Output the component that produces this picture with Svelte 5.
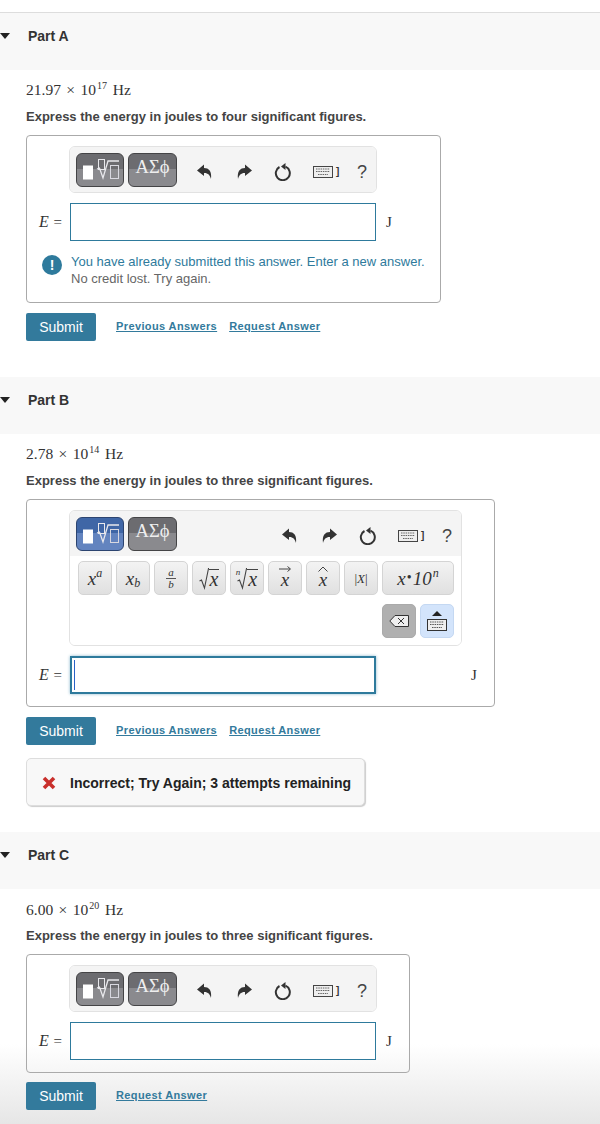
<script>
  const parts = [
    { name: 'Part A', base: '21.97', exp: '17', figures: 'four', expanded: false, alert: true, previous: true },
    { name: 'Part B', base: '2.78', exp: '14', figures: 'three', expanded: true, focused: true, previous: true, wrong: true },
    { name: 'Part C', base: '6.00', exp: '20', figures: 'three', expanded: false }
  ];
</script>

{#snippet templates()}
  <svg width="46" height="32" viewBox="1 1 46 32" fill="none">
    <rect x="7" y="12.500" width="10" height="14" fill="#fff" />
    <rect x="22.500" y="6.500" width="6" height="10" stroke="#e8e8ec" />
    <path d="M21 16l2.500-1 3.500 10 5-17h11" stroke="#e8e8ec" stroke-width="1.300" />
    <rect x="34.500" y="12.500" width="8" height="13" stroke="#d8d8e0" />
  </svg>
{/snippet}

{#snippet keyboard()}
  <svg width="20" height="12" viewBox="0 0 20 12"><rect x=".5" y=".5" width="19" height="11" fill="#eee" stroke="#444" /><path d="M3 3h14M3 5.500h14M5 8.500h10" stroke="#666" stroke-dasharray="1.500 .8" /></svg>
{/snippet}

{#snippet radical()}
  <svg class="radical" width="10" height="22" viewBox="0 0 10 22" fill="none"><path d="M.5 13l2-1 3 8 4-19.500h.5" stroke="#444" stroke-width="1.100" /></svg>
{/snippet}

{#snippet toolIcons()}
  <div class="tools">
    <svg width="18" height="18" viewBox="0 0 18 18"><path d="M1 7.500L8 1.500v3.400c4.800 0 8 3.200 7 11-1-4-3.200-6.200-7-6v3z" fill="#333" /></svg>
    <svg width="18" height="18" viewBox="0 0 18 18"><path d="M17 7.500L10 1.500v3.400c-4.800 0-8 3.200-7 11 1-4 3.200-6.200 7-6v3z" fill="#333" /></svg>
    <svg width="18" height="18" viewBox="0 0 18 18" fill="none"><path d="M5.500 4a7 7 0 1 0 6-.3" stroke="#333" stroke-width="2" /><path d="M11.500 0v7L7 3.500z" fill="#333" /></svg>
    <span class="kbd-wrap">
      {@render keyboard()}
      <span class="bracket">]</span>
    </span>
    <span class="help">?</span>
  </div>
{/snippet}

{#snippet toolbar(expanded)}
  <div class="toolbar" class:wide={expanded}>
    <div class="tool-top">
      <button class="tab" class:active={expanded}>{@render templates()}</button>
      <button class="tab greek">ΑΣϕ</button>
      {@render toolIcons()}
    </div>
    {#if expanded}
      <div class="keys">
        <button class="key"><i>x</i><sup><i>a</i></sup></button>
        <button class="key"><i>x</i><sub><i>b</i></sub></button>
        <button class="key"><span class="frac"><i>a</i><i class="den">b</i></span></button>
        <button class="key">{@render radical()}<i class="over">x</i></button>
        <button class="key"><sup class="root"><i>n</i></sup>{@render radical()}<i class="over">x</i></button>
        <button class="key accent">
          <svg width="12" height="6" viewBox="0 0 12 6" fill="none"><path d="M0 3h11M8.500 .5L11.500 3 8.500 5.500" stroke="#444" /></svg>
          <i>x</i>
        </button>
        <button class="key accent">
          <svg width="12" height="6" viewBox="0 0 12 6" fill="none"><path d="M1.500 5.500L6 1l4.500 4.500" stroke="#444" /></svg>
          <i>x</i>
        </button>
        <button class="key abs">|<i>X</i>|</button>
        <button class="key sci"><i>x</i><span class="dot">•</span><i>10</i><sup><i>n</i></sup></button>
        <div class="key-row2">
          <button class="key del" aria-label="delete">
            <svg width="20" height="12" viewBox="0 0 20 12"><path d="M6 .5h13.500v11H6L.8 6z" fill="#eee" stroke="#333" /><path d="M9 3l6 6M15 3l-6 6" stroke="#333" /></svg>
          </button>
          <button class="key kb" aria-label="keyboard">
            <svg width="20" height="22" viewBox="0 0 20 22"><path d="M10 1l5 5H5z" fill="#222" /><rect x=".5" y="9.500" width="19" height="11" fill="#eee" stroke="#333" /><path d="M3 12h14M3 14.500h14M5 17.500h10" stroke="#555" stroke-dasharray="1.500 .8" /></svg>
          </button>
        </div>
      </div>
    {/if}
  </div>
{/snippet}

<div class="page">
  {#each parts as part}
    <section class="part">
      <header class="part-head">
        <span class="caret"></span>
        <h2>{part.name}</h2>
      </header>
      <div class="body">
        <p class="freq">{part.base} <span class="times">×</span> 10<sup>{part.exp}</sup> Hz</p>
        <p class="prompt">Express the energy in joules to {part.figures} significant figures.</p>
        <div class="answer">
          <div class="answer-grid">
            <div class="tool-cell">{@render toolbar(part.expanded)}</div>
            <div class="eq"><i>E</i> =</div>
            <div class="field" class:focused={part.focused}>
              {#if part.focused}<span class="cursor"></span>{/if}
            </div>
            <div class="unit">J</div>
          </div>
          {#if part.alert}
            <div class="alert">
              <span class="alert-icon">!</span>
              <p><span class="alert-blue">You have already submitted this answer. Enter a new answer.</span><br />No credit lost. Try again.</p>
            </div>
          {/if}
        </div>
        <div class="actions">
          <button class="submit">Submit</button>
          {#if part.previous}<a href="#prev" class="prev">Previous Answers</a>{/if}
          <a href="#req">Request Answer</a>
        </div>
        {#if part.wrong}
          <div class="wrong">
            <svg width="14" height="14" viewBox="0 0 14 14"><path d="M2 2l10 10M12 2L2 12" stroke="#c9302c" stroke-width="3.600" /></svg>
            <span>Incorrect; Try Again; 3 attempts remaining</span>
          </div>
        {/if}
      </div>
    </section>
  {/each}
</div>

<style>
  :global(body) {
    margin: 0;
    background: #fff;
  }

  .page {
    height: 1112px;
    padding-top: 12px;
    overflow: hidden;
    font-family: "Liberation Sans", Arial, sans-serif;
    color: #333;
    background: linear-gradient(rgba(230, 230, 230, 0) calc(100% - 80px), #e6e6e6);
  }

  .part:first-child {
    border-top: 1px solid #ddd;
  }

  .part-head {
    display: flex;
    align-items: center;
    height: 57px;
    background: #f8f8f8;
    padding-bottom: 11px;
    box-sizing: border-box;
  }

  .caret {
    width: 0;
    height: 0;
    border: 5px solid transparent;
    border-top: 6px solid #222;
    border-bottom: 0;
    margin-right: 18px;
  }

  h2 {
    margin: 0;
    font-size: 14px;
    font-weight: bold;
    color: #333;
  }

  .body {
    padding: 0 0 0 26px;
  }

  .part:nth-child(1) .body {
    padding-bottom: 36px;
  }

  .part:nth-child(2) .body {
    padding-bottom: 26px;
  }

  .freq {
    margin: 0;
    padding-top: 11px;
    height: 26px;
    font: 15.5px/18px "Liberation Serif", serif;
    color: #333;
  }

  .part:nth-child(3) .freq {
    padding-top: 12px;
    height: 25px;
  }

  .times {
    margin: 0 1.5px;
  }

  .freq sup {
    font-size: 10px;
    line-height: 0;
    margin: 0 2px 0 1px;
  }

  .prompt {
    margin: 0;
    padding-top: 2px;
    height: 26px;
    font-size: 13px;
    line-height: 16px;
    font-weight: bold;
    color: #444;
  }

  .answer {
    width: fit-content;
    border: 1px solid #aaa;
    border-radius: 4px;
    padding: 10px 15px 12px 0;
  }

  .answer-grid {
    display: grid;
    grid-template-columns: 43px auto 17px;
    justify-content: start;
    align-items: center;
  }

  .tool-cell {
    grid-column: 2 / 3;
    grid-row: 1;
    margin-left: -1px;
    margin-bottom: 10px;
  }

  .eq {
    grid-column: 1;
    grid-row: 2;
    font: 15px "Liberation Serif", serif;
    color: #333;
    text-align: right;
    padding-right: 8px;
    white-space: nowrap;
  }

  .eq i {
    font-size: 16px;
    margin-right: 1px;
  }

  .field {
    grid-column: 2;
    grid-row: 2;
    box-sizing: border-box;
    width: 306px;
    height: 38px;
    border: 1px solid #2e7a9c;
    background: #fff;
    position: relative;
  }

  .field.focused {
    border: 2px solid #2e7a9c;
    box-shadow: 0 0 3px #8cb8cc;
  }

  .cursor {
    position: absolute;
    left: 2px;
    top: 2px;
    bottom: 2px;
    width: 1px;
    background: #2a62c8;
  }

  .unit {
    grid-column: 3;
    grid-row: 2;
    font: 15px "Liberation Serif", serif;
    color: #333;
    padding-left: 9px;
  }

  .toolbar {
    box-sizing: border-box;
    width: 308px;
    border: 1px solid #e2e2e2;
    border-radius: 6px;
    overflow: hidden;
  }

  .toolbar.wide {
    width: 393px;
  }

  .tool-top {
    display: flex;
    align-items: center;
    gap: 4px;
    height: 45px;
    padding-left: 6px;
    background: #f4f4f4;
  }

  button {
    font-family: inherit;
    padding: 0;
    cursor: pointer;
  }

  .tab {
    width: 48px;
    height: 34px;
    display: flex;
    align-items: center;
    justify-content: center;
    border: 1px solid #444446;
    border-radius: 6px;
    background: linear-gradient(#6c6c70 47%, #8a8a8e 47%);
  }

  .tab.active {
    background: linear-gradient(#3f66a6 47%, #6384bf 47%);
    border-color: #2c4470;
  }

  .tab.greek {
    width: 49px;
    color: #eee;
    font: 18.5px "Liberation Serif", serif;
    padding-bottom: 5px;
    box-sizing: border-box;
  }

  .tools {
    margin-left: auto;
    display: flex;
    align-items: center;
    padding-right: 8px;
    padding-top: 5px;
  }

  .tools svg {
    display: block;
  }

  .tools > svg {
    margin-right: 21px;
  }

  .kbd-wrap {
    display: flex;
    align-items: center;
    gap: 3px;
    margin: 0 13px 0 0;
    width: 30px;
  }

  .bracket {
    font-size: 10px;
    font-weight: bold;
    line-height: 12px;
  }

  .help {
    font-size: 18px;
    color: #444;
    width: 12px;
    text-align: center;
  }

  .keys {
    display: flex;
    flex-wrap: wrap;
    gap: 4px;
    padding: 5px 7px 7px 8px;
    background: #fff;
  }

  .key {
    width: 34px;
    height: 34px;
    box-sizing: border-box;
    border: 1px solid #d4d4d4;
    border-radius: 5px;
    background: linear-gradient(#f3f3f3, #e0e0e0);
    color: #333;
    font: 19px/1 "Liberation Serif", serif;
    display: flex;
    align-items: center;
    justify-content: center;
  }

  .key sup {
    font-size: 12px;
    line-height: 0;
    margin-top: -10px;
  }

  .key sub {
    font-size: 12px;
    line-height: 0;
    margin-top: 10px;
  }

  .frac {
    display: flex;
    flex-direction: column;
    align-items: center;
    font-size: 11px;
    line-height: 11px;
  }

  .den {
    border-top: 1px solid #555;
    padding: 0 2px;
  }

  .radical {
    display: block;
    flex: none;
    margin-top: 1px;
  }

  .over {
    border-top: 1px solid #444;
    line-height: 19px;
    padding: 0 1px;
    margin-top: 1px;
    font-size: 20px;
  }

  .key .root {
    font-size: 9px;
    margin: -12px -3px 0 0;
  }

  .accent {
    flex-direction: column;
    gap: 0;
    font-size: 19px;
  }

  .accent svg {
    display: block;
    margin-top: -4px;
  }

  .accent i {
    line-height: 15px;
  }

  .key.abs {
    font-size: 13px;
  }

  .key.sci {
    width: 72px;
    font-size: 19px;
    gap: 1px;
  }

  .dot {
    font-size: 14px;
  }

  .key-row2 {
    width: 100%;
    display: flex;
    justify-content: flex-end;
    gap: 4px;
    padding-top: 5px;
  }

  .key.del {
    background: #b0b0b0;
    border-color: #aaa;
  }

  .key.kb {
    background: #d3e4fb;
    border-color: #c4d8f2;
  }

  .alert {
    display: flex;
    align-items: flex-start;
    margin: 12px 0 0 15px;
    padding-bottom: 3px;
    font-size: 13px;
    line-height: 17px;
    color: #666;
  }

  .alert p {
    margin: 0;
    white-space: nowrap;
  }

  .alert-blue {
    color: #2e7a9c;
  }

  .alert-icon {
    flex: none;
    width: 20px;
    height: 20px;
    border-radius: 50%;
    background: #2e7a9c;
    color: #fff;
    font-size: 14px;
    font-weight: bold;
    line-height: 20px;
    text-align: center;
    margin: 2px 9px 0 0;
  }

  .actions {
    display: flex;
    align-items: center;
    margin-top: 10px;
    height: 28px;
  }

  .part:nth-child(3) .actions {
    margin-top: 9px;
  }

  .submit {
    width: 70px;
    height: 28px;
    margin-right: 20px;
    border: 0;
    border-radius: 2px;
    background: #337a9c;
    color: #fff;
    font-size: 14px;
  }

  .actions a {
    color: #337a9c;
    font-size: 11px;
    font-weight: bold;
    letter-spacing: 0.035em;
    margin-top: -2px;
  }

  .prev {
    margin-right: 12px;
  }

  .wrong {
    display: flex;
    align-items: center;
    gap: 14px;
    box-sizing: border-box;
    width: 339px;
    height: 48px;
    margin-top: 13px;
    padding: 2px 0 0 15px;
    background: #f8f8f8;
    border: 1px solid #ddd;
    border-radius: 5px;
    box-shadow: 1px 1px 1px #ccc;
    font-size: 14px;
    font-weight: bold;
    color: #222;
    white-space: nowrap;
  }
</style>
